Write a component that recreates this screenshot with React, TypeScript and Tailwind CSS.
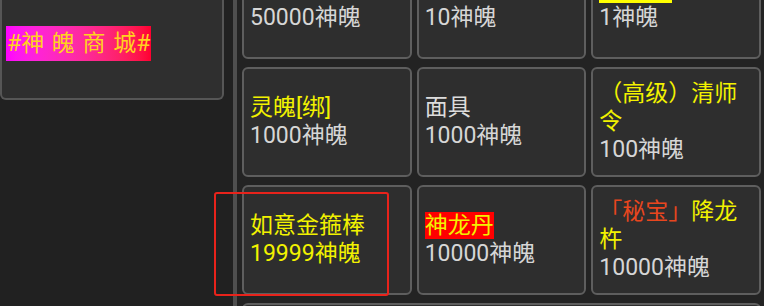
import React from "react";

type Item = {
  name: React.ReactNode;
  price: string;
  priceClass?: string;
};

const items: Item[] = [
  { name: <span className="text-[#ff3a1a]">法宝</span>, price: "50000神魄" },
  { name: <span className="text-[#f2f200]">四灵神兽</span>, price: "10神魄" },
  {
    name: <span className="bg-[#ffff00] px-[2px] text-white">神兽蛋</span>,
    price: "1神魄",
  },
  { name: <span className="text-[#f2f200]">灵魄[绑]</span>, price: "1000神魄" },
  { name: <span className="text-[#dcdcdc]">面具</span>, price: "1000神魄" },
  { name: <span className="text-[#f2f200]">（高级）清师令</span>, price: "100神魄" },
  {
    name: <span className="text-[#f2f200]">如意金箍棒</span>,
    price: "19999神魄",
    priceClass: "text-[#f2f200]",
  },
  { name: <span className="bg-[#ff0000] text-[#f2f200]">神龙丹</span>, price: "10000神魄" },
  {
    name: (
      <>
        <span className="text-[#e8461e]">「秘宝」</span>
        <span className="text-[#f2f200]">降龙杵</span>
      </>
    ),
    price: "10000神魄",
  },
];

function ShopCard({ item }: { item: Item }) {
  return (
    <div className="h-[110px] rounded-[6px] border-2 border-[#5e5e5e] bg-[#2e2e2e] px-[6px] flex flex-col justify-center text-[23px] leading-[28px]">
      <div>{item.name}</div>
      <div className={item.priceClass ?? "text-[#d6d6d6]"}>{item.price}</div>
    </div>
  );
}

export default function App() {
  return (
    <div
      className="relative w-[764px] h-[306px] overflow-hidden bg-[#232323] flex"
      style={{ fontFamily: 'Roboto, "Noto Sans CJK SC", sans-serif' }}
    >
      <div className="w-[233px] shrink-0 bg-[#212121] pr-[9px]">
        <div className="h-[100px] rounded-b-[6px] border-2 border-t-0 border-[#565656] bg-[#2f2f2f] flex items-center pl-[4px]">
          <span className="h-[35px] leading-[35px] -mt-[11px] text-[23px] text-[#ffd21e] bg-gradient-to-r from-[#ff00ff] to-[#ff0030] pl-[1px] pr-[1px] [word-spacing:2px]">
            #神 魄 商 城#
          </span>
        </div>
      </div>
      <div className="w-[4px] shrink-0 bg-[#4f4f4f]" />
      <div className="flex-1 pl-[5px] pr-[3px]">
        <div className="-mt-[51px] grid grid-cols-3 gap-x-[5px] gap-y-[8px]">
          {items.map((item, i) => (
            <ShopCard key={i} item={item} />
          ))}
          <div className="col-span-3 h-[60px] rounded-[6px] border-2 border-[#5e5e5e] bg-[#2e2e2e]" />
        </div>
      </div>
      <div className="absolute left-[214px] top-[192px] w-[175px] h-[104px] rounded-[3px] border-2 border-[#e8231b]" />
    </div>
  );
}
